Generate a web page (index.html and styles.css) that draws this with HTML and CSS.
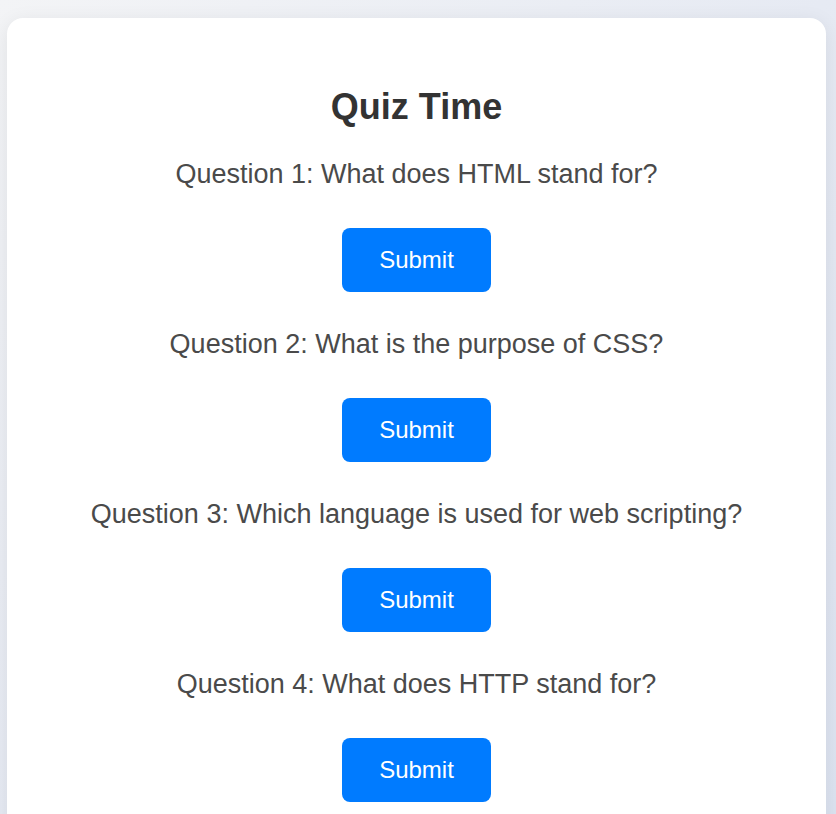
FILE: index.html
```html
<!DOCTYPE html>
<html>
<head>
<meta charset="utf-8">
<link rel="stylesheet" href="styles.css">
</head>
<body>
<div class="card">
  <h1 class="title">Quiz Time</h1>
  <div class="question">
    <p class="q-text">Question 1: What does HTML stand for?</p>
    <button class="submit">Submit</button>
  </div>
  <div class="question">
    <p class="q-text">Question 2: What is the purpose of CSS?</p>
    <button class="submit">Submit</button>
  </div>
  <div class="question">
    <p class="q-text">Question 3: Which language is used for web scripting?</p>
    <button class="submit">Submit</button>
  </div>
  <div class="question">
    <p class="q-text">Question 4: What does HTTP stand for?</p>
    <button class="submit">Submit</button>
  </div>
</div>
</body>
</html>
```
FILE: styles.css
```css
html, body {
  margin: 0;
  height: 100%;
}
body {
  padding: 18px 10px 0 7px;
  box-sizing: border-box;
  background: linear-gradient(135deg, #f3f4f6 0%, #e6eaf3 50%, #dce3f0 100%);
  font-family: "Liberation Sans", Arial, sans-serif;
  overflow: hidden;
}
.card {
  background: #ffffff;
  border-radius: 16px;
  box-shadow: 0 4px 20px rgba(0, 0, 0, 0.08);
  padding: 69px 40px 40px;
  display: flex;
  flex-direction: column;
  align-items: center;
  text-align: center;
}
.title {
  margin: 0 0 33px;
  font-size: 36px;
  line-height: 40px;
  font-weight: bold;
  color: #333333;
}
.question {
  display: flex;
  flex-direction: column;
  align-items: center;
  margin-bottom: 38px;
}
.q-text {
  margin: 0 0 40px;
  font-size: 27px;
  line-height: 28px;
  color: #4a4a4a;
}
.submit {
  width: 149px;
  height: 64px;
  border: none;
  border-radius: 8px;
  background: #007bff;
  color: #ffffff;
  font-family: "Liberation Sans", Arial, sans-serif;
  font-size: 24px;
  cursor: pointer;
}
```
